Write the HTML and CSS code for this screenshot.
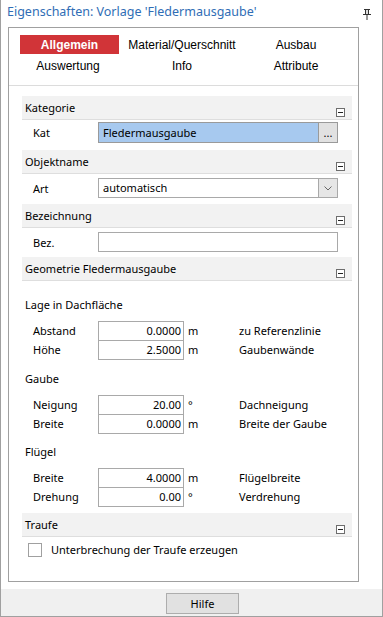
FILE: index.html
```html
<html>
<head>
    <title>Eigenschaften</title>
    <link rel="stylesheet" href="styles.css">
</head>
<body>
    <div class="window">
        <!-- Title bar -->
        <div class="titlebar">
            <span class="title">Eigenschaften: Vorlage 'Fledermausgaube'</span>
            <svg class="pin" width="8" height="11" viewBox="0 0 8 11">
                <path d="M1 0.5H7M2.5 0.5V5.5M5.5 0.5V5.5M0 5.5H8M4 5.5V11" stroke="#333" stroke-width="1" fill="none"/>
                <path d="M3 1H5V5H3Z" fill="#ddd"/>
            </svg>
        </div>

        <div class="panel">
            <!-- Tabs -->
            <div class="tabs">
                <div class="tab active">Allgemein</div>
                <div class="tab">Material/Querschnitt</div>
                <div class="tab">Ausbau</div>
                <div class="tab">Auswertung</div>
                <div class="tab">Info</div>
                <div class="tab">Attribute</div>
            </div>

            <div class="content">
                <div class="group-head"><span>Kategorie</span><span class="collapse"></span></div>
                <div class="row row-kat">
                    <span class="label">Kat</span>
                    <div class="field field-picked">Fledermausgaube</div>
                    <div class="dots">...</div>
                </div>

                <div class="group-head head-obj"><span>Objektname</span><span class="collapse"></span></div>
                <div class="row row-art">
                    <span class="label">Art</span>
                    <div class="select">
                        <span class="select-text">automatisch</span>
                        <span class="select-arrow">
                            <svg width="8" height="5" viewBox="0 0 8 5"><path d="M0.5 0.5L4 4L7.5 0.5" stroke="#666" stroke-width="1" fill="none"/></svg>
                        </span>
                    </div>
                </div>

                <div class="group-head head-bez"><span>Bezeichnung</span><span class="collapse"></span></div>
                <div class="row row-bez">
                    <span class="label">Bez.</span>
                    <div class="field field-wide"></div>
                </div>

                <div class="group-head head-geo"><span>Geometrie Fledermausgaube</span><span class="collapse"></span></div>

                <div class="subhead sub-lage">Lage in Dachfläche</div>
                <div class="num-row first">
                    <span class="label">Abstand</span>
                    <div class="field num">0.0000</div>
                    <span class="unit">m</span>
                    <span class="desc">zu Referenzlinie</span>
                </div>
                <div class="num-row">
                    <span class="label">Höhe</span>
                    <div class="field num">2.5000</div>
                    <span class="unit">m</span>
                    <span class="desc">Gaubenwände</span>
                </div>

                <div class="subhead sub-gaube">Gaube</div>
                <div class="num-row first">
                    <span class="label">Neigung</span>
                    <div class="field num">20.00</div>
                    <span class="unit">°</span>
                    <span class="desc">Dachneigung</span>
                </div>
                <div class="num-row">
                    <span class="label">Breite</span>
                    <div class="field num">0.0000</div>
                    <span class="unit">m</span>
                    <span class="desc">Breite der Gaube</span>
                </div>

                <div class="subhead sub-fluegel">Flügel</div>
                <div class="num-row first">
                    <span class="label">Breite</span>
                    <div class="field num">4.0000</div>
                    <span class="unit">m</span>
                    <span class="desc">Flügelbreite</span>
                </div>
                <div class="num-row">
                    <span class="label">Drehung</span>
                    <div class="field num">0.00</div>
                    <span class="unit">°</span>
                    <span class="desc">Verdrehung</span>
                </div>

                <div class="group-head head-traufe"><span>Traufe</span><span class="collapse"></span></div>
                <div class="check-row">
                    <span class="checkbox"></span>
                    <span>Unterbrechung der Traufe erzeugen</span>
                </div>
            </div>
        </div>

        <div class="footer">
            <div class="help">Hilfe</div>
        </div>
    </div>
</body>
</html>
```

FILE: styles.css
```css
* {
    box-sizing: border-box;
}

body {
    margin: 0;
    background: #fff;
    font-family: "Noto Sans", sans-serif;
    font-size: 11px;
    color: #000;
}

.window {
    width: 383px;
    height: 617px;
    border: 1px solid #a0a0a0;
    border-top: none;
    display: flex;
    flex-direction: column;
}

.titlebar {
    height: 27px;
    flex: none;
    display: flex;
    justify-content: space-between;
    align-items: flex-start;
    padding: 0 11px 0 6px;
}

.title {
    font-size: 12.5px;
    line-height: 16px;
    margin-top: 4px;
    color: #2f6db5;
}

.pin {
    margin-top: 9px;
}

.panel {
    width: 351px;
    height: 555px;
    flex: none;
    margin-left: 7px;
    border: 1px solid #a0a0a0;
}

/* Tabs */
.tabs {
    display: grid;
    grid-template-columns: 114px 114px 114px;
    grid-auto-rows: 19px;
    row-gap: 2px;
    height: 58px;
    padding: 7px 0 0 2px;
    border-bottom: 1px solid #dcdcdc;
    font-family: "Liberation Sans", Arial, sans-serif;
    font-size: 12px;
}

.tab {
    display: flex;
    align-items: center;
    justify-content: center;
}

.tab.active {
    margin: 0 6px 0 9px;
    background: #d13438;
    color: #fff;
    font-weight: bold;
}

/* Content */
.content {
    padding: 10px 6px 0 13px;
}

.group-head {
    height: 24px;
    display: flex;
    justify-content: space-between;
    align-items: center;
    padding: 0 7px 0 3px;
    background: #f2f2f2;
    border-bottom: 1px solid #dedede;
}

.collapse {
    width: 9px;
    height: 9px;
    align-self: flex-end;
    margin-bottom: 2px;
    border: 1px solid #6d6d6d;
    background: #fff;
    padding-top: 3px;
    padding-left: 1px;
}

.collapse::after {
    content: "";
    display: block;
    width: 5px;
    height: 1px;
    background: #222;
}

.head-obj { margin-top: 7px; }
.head-bez { margin-top: 6px; }
.head-geo { margin-top: 5px; }
.head-traufe { margin-top: 7px; }

.row {
    display: flex;
    align-items: center;
}

.label {
    width: 76px;
    flex: none;
    padding-left: 11px;
}

.field {
    border: 1px solid #a9a9a9;
    background: #fff;
}

.row-kat {
    margin-top: 2px;
    height: 21px;
}

.field-picked {
    width: 221px;
    height: 21px;
    line-height: 19px;
    padding-left: 4px;
    background: #a7c9ef;
    border-color: #9a9a9a;
}

.dots {
    width: 20px;
    height: 21px;
    margin-left: -1px;
    border: 1px solid #9a9a9a;
    background: #e1e1e1;
    text-align: center;
    line-height: 19px;
}

.row-art {
    margin-top: 4px;
    height: 20px;
}

.select {
    width: 240px;
    height: 20px;
    display: flex;
    border: 1px solid #a9a9a9;
}

.select-text {
    flex: 1;
    padding-left: 4px;
    line-height: 18px;
}

.select-arrow {
    width: 19px;
    display: flex;
    align-items: center;
    justify-content: center;
    border-left: 1px solid #a9a9a9;
    background: #e6e6e6;
}

.row-bez {
    margin-top: 4px;
    height: 20px;
}

.field-wide {
    width: 240px;
    height: 20px;
}

.subhead {
    padding-left: 3px;
    line-height: 16px;
}

.sub-lage { margin-top: 16px; }
.sub-gaube { margin-top: 12px; }
.sub-fluegel { margin-top: 11px; }

.num-row {
    display: flex;
    align-items: flex-start;
    height: 19px;
}

.num-row.first {
    margin-top: 8px;
}

.num {
    width: 86px;
    height: 20px;
    flex: none;
    text-align: right;
    padding-right: 2px;
    line-height: 18px;
}

.num-row .label,
.unit,
.desc {
    line-height: 20px;
}

.unit {
    width: 55px;
    flex: none;
    padding-left: 4px;
}

.check-row {
    display: flex;
    align-items: center;
    margin-top: 5px;
    padding-left: 6px;
}

.checkbox {
    width: 14px;
    height: 14px;
    margin-right: 9px;
    border: 1px solid #a0a0a0;
    background: #fff;
}

/* Footer */
.footer {
    height: 27px;
    flex: none;
    margin-top: 7px;
    padding: 4px 0 0 165px;
    background: #f0f0f0;
}

.help {
    width: 73px;
    height: 21px;
    border: 1px solid #adadad;
    background: #e1e1e1;
    text-align: center;
    line-height: 19px;
}
```
